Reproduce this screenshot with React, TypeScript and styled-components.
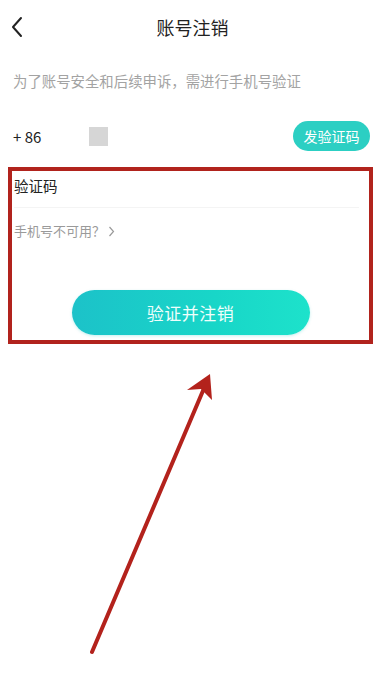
import { createGlobalStyle, styled } from "styled-components";

const GlobalStyle = createGlobalStyle`
  html, body {
    margin: 0;
    padding: 0;
    background: #ffffff;
  }
  body {
    font-family: "Noto Sans CJK SC", "Noto Sans", sans-serif;
  }
`;

const Page = styled.div`
  position: relative;
  width: 385px;
  height: 674px;
  overflow: hidden;
  background: #ffffff;
`;

const Header = styled.header`
  display: grid;
  grid-template-columns: 48px 1fr 48px;
  align-items: center;
  height: 54px;
`;

const BackButton = styled.button`
  display: flex;
  align-items: center;
  padding: 0 0 0 10px;
  height: 54px;
  border: none;
  background: transparent;
`;

const Title = styled.h1`
  margin: 0;
  text-align: center;
  font-size: 18px;
  font-weight: 400;
  color: #222222;
`;

const Hint = styled.p`
  margin: 17px 0 0;
  padding-left: 13px;
  font-size: 14.4px;
  line-height: 20px;
  color: #a3a3a3;
`;

const PhoneRow = styled.div`
  display: flex;
  align-items: center;
  height: 40px;
  margin-top: 25px;
  padding: 0 15px 0 13px;
`;

const Prefix = styled.span`
  width: 76px;
  font-size: 15px;
  color: #222222;
`;

const Masked = styled.span`
  width: 19px;
  height: 19px;
  background: #d6d6d6;
`;

const SendButton = styled.button`
  margin-left: auto;
  width: 77px;
  height: 30px;
  border: none;
  border-radius: 15px;
  background: #2ccfc3;
  color: #ffffff;
  font-family: inherit;
  font-size: 14px;
  padding: 0;
`;

const Highlight = styled.section`
  margin: 11px 0 0 8px;
  width: 365px;
  box-sizing: border-box;
  border: 4px solid #b1231d;
  padding: 5px 0 5px 2px;
  display: flex;
  flex-direction: column;
`;

const CodeLabel = styled.div`
  font-size: 14.5px;
  line-height: 20px;
  color: #222222;
  padding-bottom: 11px;
  border-bottom: 1px solid #f4f4f4;
  margin-right: 10px;
`;

const Unavailable = styled.div`
  display: flex;
  align-items: center;
  gap: 3px;
  margin-top: 13px;
  font-size: 13px;
  line-height: 20px;
  color: #9a9a9a;
`;

const SubmitButton = styled.button`
  align-self: center;
  margin: 49px 0 0 -2px;
  width: 238px;
  height: 45px;
  border: none;
  border-radius: 23px;
  background: linear-gradient(90deg, #1cc2c9 0%, #18d6c8 60%, #1de2cb 100%);
  box-shadow: 0 1px 3px rgba(20, 190, 190, 0.25);
  color: #effffc;
  font-family: inherit;
  font-size: 17px;
  letter-spacing: 0.5px;
  padding: 0;
`;

const ArrowLayer = styled.svg`
  position: absolute;
  left: 0;
  top: 0;
  pointer-events: none;
`;

const App = () => {
  return (
    <Page>
      <GlobalStyle />
      <Header>
        <BackButton aria-label="back">
          <svg width="14" height="22" viewBox="0 0 14 22">
            <polyline
              points="11,2 3,11 11,20"
              fill="none"
              stroke="#222"
              strokeWidth="2"
              strokeLinecap="round"
              strokeLinejoin="round"
            />
          </svg>
        </BackButton>
        <Title>账号注销</Title>
        <span />
      </Header>
      <Hint>为了账号安全和后续申诉，需进行手机号验证</Hint>
      <PhoneRow>
        <Prefix>+ 86</Prefix>
        <Masked />
        <SendButton>发验证码</SendButton>
      </PhoneRow>
      <Highlight>
        <CodeLabel>验证码</CodeLabel>
        <Unavailable>
          手机号不可用？
          <svg width="7" height="11" viewBox="0 0 7 11">
            <polyline
              points="1.5,1 5.5,5.5 1.5,10"
              fill="none"
              stroke="#9a9a9a"
              strokeWidth="1.2"
            />
          </svg>
        </Unavailable>
        <SubmitButton>验证并注销</SubmitButton>
      </Highlight>
      <ArrowLayer width="385" height="674" viewBox="0 0 385 674">
        <line
          x1="92"
          y1="652"
          x2="205"
          y2="386"
          stroke="#b3221c"
          strokeWidth="4"
          strokeLinecap="round"
        />
        <polygon points="210,374 187,390 201,389 212,400" fill="#b3221c" />
      </ArrowLayer>
    </Page>
  );
};

export default App;
